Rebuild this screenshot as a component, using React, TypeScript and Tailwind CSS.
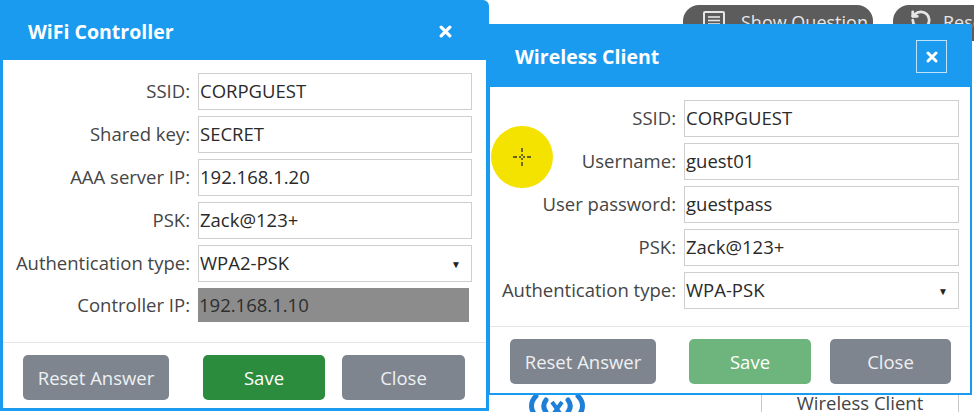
import React from "react";

type Row = { label: string; value: string; kind?: "input" | "select" | "disabled" };

function FormRows({ rows, labelW }: { rows: Row[]; labelW: number }) {
  return (
    <div className="flex flex-col gap-[6px]">
      {rows.map((r) => (
        <div key={r.label} className="flex items-center">
          <div
            className="shrink-0 text-right text-[18.5px] text-[#454545] leading-none pr-[8px]"
            style={{ width: labelW }}
          >
            {r.label}
          </div>
          {r.kind === "disabled" ? (
            <div className="h-[34px] w-[271px] bg-[#8c8c8c] flex items-center pl-[1px] text-[18.5px] text-[#2e2e2e] leading-none">
              {r.value}
            </div>
          ) : (
            <div className="h-[37px] flex-1 border border-[#cfcfcf] bg-white flex items-center justify-between pl-[1px] pr-[10px] text-[18.5px] text-[#2a2a2a] leading-none">
              <span>{r.value}</span>
              {r.kind === "select" && <span className="text-[10px] text-[#222]">▼</span>}
            </div>
          )}
        </div>
      ))}
    </div>
  );
}

function Buttons({ save, gap1, gap2, closeW }: { save: string; gap1: number; gap2: number; closeW: number }) {
  return (
    <div className="flex items-center pl-[20px]">
      <div className="h-[45px] w-[146px] rounded-[5px] bg-[#7e858f] flex items-center justify-center text-[18.5px] text-[#eef0f2]">
        Reset Answer
      </div>
      <div
        className={`h-[45px] w-[122px] rounded-[5px] flex items-center justify-center text-[18.5px] text-white ${save}`}
        style={{ marginLeft: gap1 }}
      >
        Save
      </div>
      <div
        className="h-[45px] rounded-[5px] bg-[#7e858f] flex items-center justify-center text-[18.5px] text-[#eef0f2]"
        style={{ marginLeft: gap2, width: closeW }}
      >
        Close
      </div>
    </div>
  );
}

function XIcon({ size }: { size: number }) {
  return (
    <svg width={size} height={size} viewBox="0 0 12 12">
      <path d="M2 2L10 10M10 2L2 10" stroke="white" strokeWidth="3" strokeLinecap="round" />
    </svg>
  );
}

export default function App() {
  return (
    <div className="relative w-[974px] h-[412px] overflow-hidden bg-white font-['Open_Sans','Noto_Sans',sans-serif]">
      {/* background page: top buttons */}
      <div className="absolute left-[683px] top-[5px] w-[190px] h-[36px] rounded-[16px] bg-[#5c5c5c] flex items-start pt-[4px] pl-[20px] gap-[16px]">
        <svg width="22" height="18" viewBox="0 0 22 18" className="mt-[2px]">
          <rect x="1" y="1" width="20" height="16" rx="1" fill="none" stroke="#e6e6e6" strokeWidth="2" />
          <line x1="5" y1="6" x2="17" y2="6" stroke="#e6e6e6" strokeWidth="1.6" />
          <line x1="5" y1="9.5" x2="17" y2="9.5" stroke="#e6e6e6" strokeWidth="1.6" />
          <line x1="5" y1="13" x2="17" y2="13" stroke="#e6e6e6" strokeWidth="1.6" />
        </svg>
        <span className="text-[18px] text-[#e8e8e8] leading-none mt-[4px]">Show Question</span>
      </div>
      <div className="absolute left-[893px] top-[5px] w-[120px] h-[36px] rounded-[16px] bg-[#5c5c5c] flex items-start pt-[4px] pl-[16px] gap-[10px]">
        <svg width="24" height="22" viewBox="0 0 24 24" fill="none" stroke="#e6e6e6" strokeWidth="3" strokeLinecap="round" strokeLinejoin="round">
          <path d="M3 12a9 9 0 1 0 9-9 9.75 9.75 0 0 0-6.74 2.74L3 8" />
          <path d="M3 3v5h5" />
        </svg>
        <span className="text-[18px] text-[#e8e8e8] leading-none mt-[4px]">Reset</span>
      </div>

      {/* background page: bottom */}
      <svg className="absolute left-[524px] top-[394px]" width="66" height="24" viewBox="0 0 66 24">
        <path d="M12 2 C6 8 6 16 12 22" fill="none" stroke="#1f7fd6" strokeWidth="5" strokeLinecap="round" />
        <path d="M22 6 C19 10 19 14 22 18" fill="none" stroke="#1f7fd6" strokeWidth="5" strokeLinecap="round" />
        <path d="M54 2 C60 8 60 16 54 22" fill="none" stroke="#1f7fd6" strokeWidth="5" strokeLinecap="round" />
        <path d="M44 6 C47 10 47 14 44 18" fill="none" stroke="#1f7fd6" strokeWidth="5" strokeLinecap="round" />
        <path d="M28 8 L38 22 M38 8 L28 22" stroke="#1f7fd6" strokeWidth="4" />
      </svg>
      <div className="absolute left-[761px] top-[370px] w-[198px] h-[60px] border border-[#c8c8c8] flex items-end justify-center pb-[17px]">
        <span className="text-[18.5px] text-[#444] leading-none">Wireless Client</span>
      </div>

      {/* WiFi Controller dialog */}
      <div className="absolute left-0 top-0 w-[489px] h-[411px] border-[3px] border-[#1a9bf0] rounded-tr-[6px] bg-white flex flex-col">
        <div className="h-[57px] shrink-0 bg-[#1a9bf0] flex items-center justify-between pl-[25px] pr-[34px]">
          <span className="text-[19.5px] font-bold text-white leading-none">WiFi Controller</span>
          <XIcon size={13} />
        </div>
        <div className="pt-[13px] pr-[14px]">
          <FormRows
            labelW={195}
            rows={[
              { label: "SSID:", value: "CORPGUEST" },
              { label: "Shared key:", value: "SECRET" },
              { label: "AAA server IP:", value: "192.168.1.20" },
              { label: "PSK:", value: "Zack@123+" },
              { label: "Authentication type:", value: "WPA2-PSK", kind: "select" },
              { label: "Controller IP:", value: "192.168.1.10", kind: "disabled" },
            ]}
          />
        </div>
        <div className="mt-[20px] border-t border-[#e6e6e6] pt-[12px]">
          <Buttons save="bg-[#2b8c3d]" gap1={34} gap2={17} closeW={123} />
        </div>
      </div>

      {/* Wireless Client dialog */}
      <div className="absolute left-[488px] top-[24px] w-[484px] h-[371px] border-2 border-[#1a9bf0] bg-white flex flex-col">
        <div className="h-[61px] shrink-0 bg-[#1a9bf0] flex items-center justify-between pl-[25px] pr-[23px]">
          <span className="text-[19.5px] font-bold text-white leading-none">Wireless Client</span>
          <div className="w-[31px] h-[33px] border border-[#bfe3fb] flex items-center justify-center">
            <XIcon size={12} />
          </div>
        </div>
        <div className="pt-[13px] pr-[11px]">
          <FormRows
            labelW={194}
            rows={[
              { label: "SSID:", value: "CORPGUEST" },
              { label: "Username:", value: "guest01" },
              { label: "User password:", value: "guestpass" },
              { label: "PSK:", value: "Zack@123+" },
              { label: "Authentication type:", value: "WPA-PSK", kind: "select" },
            ]}
          />
        </div>
        <div className="mt-[17px] border-t border-[#e6e6e6] pt-[12px]">
          <Buttons save="bg-[#6db57c]" gap1={33} gap2={19} closeW={121} />
        </div>
      </div>

      {/* cursor highlight */}
      <div className="absolute left-[491px] top-[126px] w-[62px] h-[62px] rounded-full bg-[#f4e300] flex items-center justify-center">
        <svg width="20" height="20" viewBox="0 0 20 20">
          <path d="M10 1v4M10 7v2M10 11v2M10 15v4M1 10h4M7 10h2M11 10h2M15 10h4" stroke="#3a3a20" strokeWidth="1.4" />
        </svg>
      </div>
    </div>
  );
}
